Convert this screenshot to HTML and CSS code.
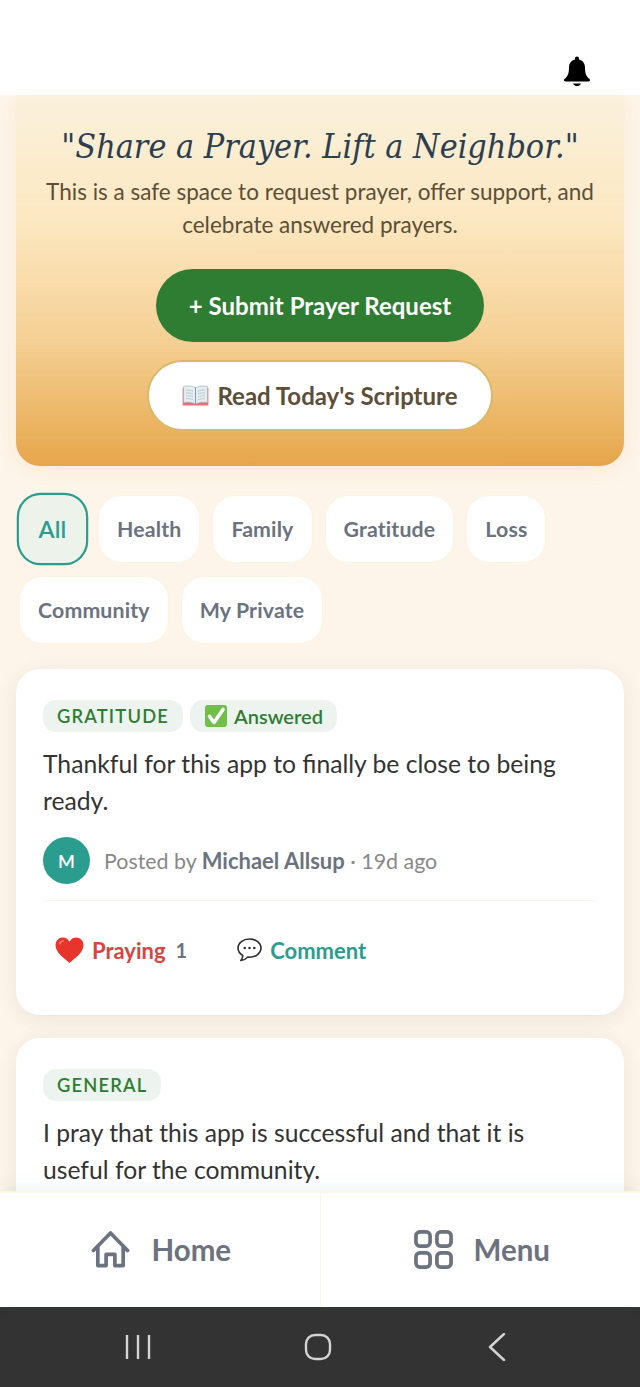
FILE: index.html
```html
<!DOCTYPE html>
<html lang="en">
<head>
<meta charset="utf-8">
<title>Prayer Wall</title>
<link rel="stylesheet" href="styles.css">
</head>
<body>
<div class="app">
  <header class="topbar">
    <svg class="bell" viewBox="0 0 26 30" aria-hidden="true"><path d="M13 0.5c-1.200 0-2 .9-2 2.100v.8C7.400 4.300 5 7.300 5 11.300c0 6.300-1.300 8.700-3.700 11-.6.600-1.300 1-1.300 1.800 0 .8.600 1.300 1.400 1.300h23.200c.8 0 1.400-.5 1.400-1.300 0-.8-.7-1.200-1.300-1.800-2.400-2.300-3.700-4.700-3.700-11 0-4-2.400-7-6-7.900v-.8c0-1.200-.8-2.100-2-2.100z"/><path d="M9 27.400h8c-.5 1.500-2.200 2.600-4 2.600s-3.500-1.100-4-2.600z"/></svg>
  </header>
  <main class="content">
    <section class="hero">
      <h1 class="hero-title">"Share a Prayer. Lift a Neighbor."</h1>
      <p class="hero-sub">This is a safe space to request prayer, offer support, and celebrate answered prayers.</p>
      <button class="btn btn-primary">+ Submit Prayer Request</button>
      <button class="btn btn-secondary">
        <svg class="emoji-book" viewBox="0 0 28 22" aria-hidden="true"><path d="M0.500 3h27v18.500h-27z" fill="#e8707a"/><path d="M1.500 1.500C6 .5 10.500 1 14 3c3.500-2 8-2.500 12.500-1.500v17C22 17.500 17.500 18 14 20c-3.500-2-8-2.500-12.500-1.500z" fill="#e6eef2" stroke="#9fb2bc" stroke-width=".7"/><path d="M14 3v17" stroke="#7f96a3" stroke-width="1"/><path d="M4 5.500c2.500-.4 5-.2 7.500 1M4 8.500c2.500-.4 5-.2 7.500 1M4 11.500c2.500-.4 5-.2 7.500 1M4 14.500c2.500-.4 5-.2 7.500 1M24 5.500c-2.500-.4-5-.2-7.500 1M24 8.500c-2.500-.4-5-.2-7.500 1M24 11.500c-2.500-.4-5-.2-7.500 1M24 14.500c-2.500-.4-5-.2-7.500 1" stroke="#b3c2ca" stroke-width=".9" fill="none"/></svg>
        Read Today's Scripture
      </button>
    </section>

    <nav class="filters">
      <span class="pill pill-active">All</span>
      <span class="pill">Health</span>
      <span class="pill">Family</span>
      <span class="pill">Gratitude</span>
      <span class="pill">Loss</span>
      <span class="pill">Community</span>
      <span class="pill">My Private</span>
    </nav>

    <article class="card">
      <div class="tags">
        <span class="tag tag-caps">GRATITUDE</span>
        <span class="tag tag-answered">
          <svg class="emoji-check" viewBox="0 0 24 24" aria-hidden="true"><rect x="1" y="1" width="22" height="22" rx="3" fill="#6fbf4a"/><path d="M5.500 12.500l4.500 6L19 5.500" fill="none" stroke="#fff" stroke-width="3.600" stroke-linecap="round" stroke-linejoin="round"/></svg>
          Answered
        </span>
      </div>
      <p class="card-text">Thankful for this app to finally be close to being ready.</p>
      <div class="author">
        <span class="avatar">M</span>
        <span class="meta">Posted by <strong>Michael Allsup</strong> · 19d ago</span>
      </div>
      <div class="actions">
        <span class="action action-pray">
          <svg class="emoji-heart" viewBox="0 0 30 28" aria-hidden="true"><path d="M15 27C9 21.500 0.500 16 .5 8.500.5 3.800 4 .5 8 .5c3 0 5.500 1.500 7 4.500 1.500-3 4-4.500 7-4.500 4 0 7.500 3.300 7.500 8C29.500 16 21 21.500 15 27z" fill="#e8352c"/><path d="M5 7c.5-1.800 1.800-2.800 3.500-3" stroke="#f58a80" stroke-width="1.500" fill="none" stroke-linecap="round"/></svg>
          <span>Praying</span><span class="count">1</span>
        </span>
        <span class="action action-comment">
          <svg class="emoji-bubble" viewBox="0 0 26 25" aria-hidden="true"><path d="M13 1C6.400 1 1 5.100 1 10.500c0 3.200 2 6 5 7.700 0 2-.8 3.800-2 5.300 3-.4 5.500-1.700 7-3.600.7.100 1.300.1 2 .1 6.600 0 12-4.200 12-9.500S19.600 1 13 1z" fill="#fff" stroke="#2b2b2b" stroke-width="1.600" stroke-linejoin="round"/><circle cx="8" cy="10.500" r="1.300" fill="#2b2b2b"/><circle cx="13" cy="10.500" r="1.300" fill="#2b2b2b"/><circle cx="18" cy="10.500" r="1.300" fill="#2b2b2b"/></svg>
          <span>Comment</span>
        </span>
      </div>
    </article>

    <article class="card">
      <div class="tags">
        <span class="tag tag-caps">GENERAL</span>
      </div>
      <p class="card-text">I pray that this app is successful and that it is useful for the community.</p>
    </article>
  </main>

  <nav class="bottom-nav">
    <a class="nav-item">
      <svg class="nav-icon" viewBox="0 0 40 40" aria-hidden="true"><path d="M2.500 21L20 3l17.500 18M7 17.500V36.500h8.500V25h9v11.500H33V17.500" fill="none" stroke="#6b7280" stroke-width="3.800" stroke-linecap="round" stroke-linejoin="round"/></svg>
      Home
    </a>
    <a class="nav-item">
      <svg class="nav-icon" viewBox="0 0 40 40" aria-hidden="true"><g fill="none" stroke="#6b7280" stroke-width="3.800"><rect x="2" y="2" width="14.500" height="14.500" rx="4"/><rect x="23.500" y="2" width="14.500" height="14.500" rx="4"/><rect x="2" y="23.500" width="14.500" height="14.500" rx="4"/><rect x="23.500" y="23.500" width="14.500" height="14.500" rx="4"/></g></svg>
      Menu
    </a>
  </nav>

  <div class="system-nav">
    <svg class="sys-icon" viewBox="0 0 28 28" aria-hidden="true"><path d="M3 2v24M14 2v24M25 2v24" stroke="#d4d4d4" stroke-width="2.400" fill="none"/></svg>
    <svg class="sys-icon" viewBox="0 0 28 28" aria-hidden="true"><rect x="2" y="2" width="24" height="24" rx="9" stroke="#d4d4d4" stroke-width="2.400" fill="none"/></svg>
    <svg class="sys-icon" viewBox="0 0 28 28" aria-hidden="true"><path d="M21 1L7 14l14 13" stroke="#d4d4d4" stroke-width="2.400" fill="none" stroke-linecap="round" stroke-linejoin="round"/></svg>
  </div>
</div>
</body>
</html>
```
FILE: styles.css
```css
* { box-sizing: border-box; }
html, body { margin: 0; padding: 0; height: 100%; }
body {
  font-family: "Lato", "Noto Sans", sans-serif;
  background: #fdf5ea;
  color: #333;
  overflow: hidden;
}
.app { height: 1387px; display: flex; flex-direction: column; }

.topbar {
  height: 95px;
  flex: none;
  background: #fff;
  display: flex;
  justify-content: flex-end;
  align-items: flex-start;
  padding: 56px 50px 0 0;
  position: relative;
  z-index: 1;
}
.bell { width: 26px; height: 30px; fill: #000; }

.content {
  flex: 1;
  min-height: 0;
  overflow: hidden;
  padding: 0 16px;
}

.hero {
  height: 371px;
  border-radius: 0 0 24px 24px;
  background: linear-gradient(180deg, #faf1dc 0%, #fce8c2 33%, #f5d094 66%, #e6a64a 100%);
  box-shadow: 0 4px 20px rgba(230, 170, 90, 0.14);
  display: flex;
  flex-direction: column;
  align-items: center;
  padding-top: 30px;
  text-align: center;
}
.hero-title {
  margin: 0;
  font: italic 400 33.800px/44px "DejaVu Serif Condensed", "DejaVu Serif", serif;
  color: #2c3e50;
  white-space: nowrap;
}
.hero-sub {
  margin: 7px 0 0;
  width: 570px;
  font-size: 22.500px;
  line-height: 32.500px;
  color: #5d4e37;
}
.btn {
  border: 0;
  font-family: inherit;
  font-size: 24px;
  font-weight: 700;
  display: flex;
  align-items: center;
  justify-content: center;
  border-radius: 37px;
}
.btn-primary {
  margin-top: 28px;
  width: 328px;
  height: 73px;
  background: #2e7d32;
  color: #fff;
}
.btn-secondary {
  margin-top: 18px;
  width: 346px;
  height: 71px;
  background: #fff;
  color: #5d4e37;
  border: 2px solid #d9b866;
  gap: 8px;
}
.emoji-book { width: 27px; height: 21px; }

.filters {
  display: flex;
  flex-wrap: wrap;
  gap: 15px 14px;
  padding: 30px 4px 0;
}
.pill {
  height: 66px;
  padding: 0 18px;
  display: flex;
  align-items: center;
  border-radius: 22px;
  background: #fff;
  color: #6b7280;
  font-size: 21.300px;
  font-weight: 700;
  letter-spacing: 0.150px;
  box-shadow: 0 0 0 1px #fdf3e0;
}
.pill-active {
  transform: scale(1.1);
  width: 65px;
  justify-content: center;
  background: #edf2ea;
  color: #2a9d8f;
  border: 2.500px solid #2a9d8f;
  box-shadow: none;
  padding: 0;
  font-weight: 600;
}

.card {
  background: #fff;
  border-radius: 24px;
  padding: 31px 27px 0;
  margin-top: 26px;
  height: 346px;
  box-shadow: 0 4px 22px rgba(0, 0, 0, 0.07);
}
.card + .card { margin-top: 23px; }
.tags { display: flex; gap: 7px; }
.tag {
  height: 32px;
  padding: 0 14px;
  display: flex;
  align-items: center;
  gap: 6px;
  border-radius: 13px;
  background: #edf3ee;
  color: #2e7d32;
  font-size: 20px;
  font-weight: 600;
}
.tag-caps { font-size: 18.300px; letter-spacing: 1.200px; }
.emoji-check { width: 24px; height: 24px; }
.card-text {
  margin: 13px 0 0;
  padding-right: 10px;
  font-size: 24.700px;
  line-height: 37px;
  color: #333;
}
.author {
  display: flex;
  align-items: center;
  gap: 14px;
  margin-top: 18px;
  height: 47px;
}
.avatar {
  width: 47px;
  height: 47px;
  border-radius: 50%;
  background: #2a9d8f;
  color: #fff;
  display: flex;
  align-items: center;
  justify-content: center;
  font-size: 18px;
  font-weight: 600;
}
.meta { font-size: 21.400px; color: #888; }
.meta strong { color: #6b7280; font-weight: 700; font-size: 22px; }
.actions {
  margin-top: 16px;
  padding: 31px 12px 0;
  border-top: 1px solid #f5f2ec;
  display: flex;
  align-items: center;
  gap: 50px;
  height: 68px;
  font-size: 22px;
  font-weight: 700;
}
.action { display: flex; align-items: center; gap: 8px; }
.action-pray { color: #d9443f; }
.action-comment { color: #2a9d8f; }
.count { color: #6b7280; margin-left: 2px; font-size: 20px; }
.emoji-heart { width: 29px; height: 27px; }
.emoji-bubble { width: 25px; height: 24px; }

.bottom-nav {
  flex: none;
  height: 116px;
  display: flex;
  background: #fff;
  border-top: 2px solid #fdf5e6;
  box-shadow: 0 -4px 14px rgba(120, 160, 180, 0.1);
  position: relative;
}
.nav-item {
  flex: 1;
  display: flex;
  align-items: center;
  justify-content: center;
  gap: 21px;
  padding: 0 0 1px 3px;
  font-size: 29.500px;
  font-weight: 700;
  color: #6b7280;
}
.nav-item + .nav-item { border-left: 1px solid #fbf5e6; }
.nav-icon { width: 39px; height: 39px; }

.system-nav {
  flex: none;
  height: 80px;
  background: #333;
  display: flex;
  align-items: center;
  justify-content: space-between;
  padding: 0 129px 0 124px;
}
.sys-icon { width: 28px; height: 28px; }
```
